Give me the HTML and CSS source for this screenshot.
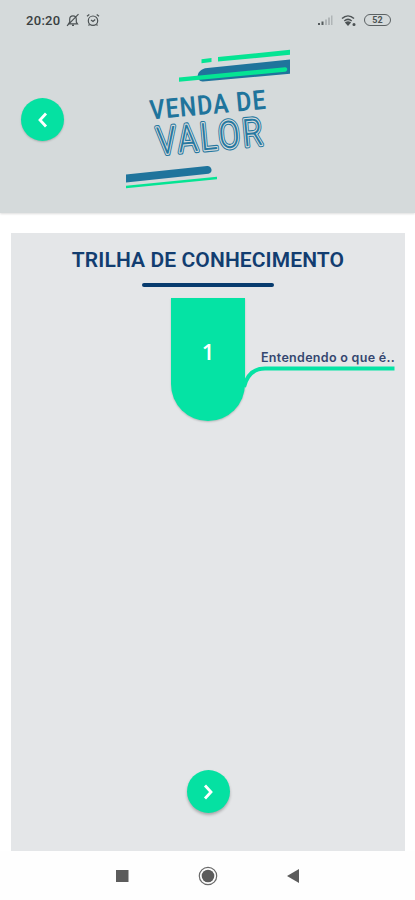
FILE: index.html
```html
<!DOCTYPE html>
<html lang="pt-BR">
<head>
<meta charset="utf-8">
<meta name="viewport" content="width=device-width, initial-scale=1">
<title>Venda de Valor</title>
<link rel="stylesheet" href="styles.css">
</head>
<body>
<div class="app">
  <header class="header">
    <div class="status">
      <div class="status-left">
        <span class="clock">20:20</span>
        <svg width="14" height="14" viewBox="0 0 14 14" class="line"><path d="M2.500 10.800h9L10.300 9V6.200C10.300 4 9 2.800 7 2.800S3.700 4 3.700 6.200V9zM6 12.300h2M1 12.800 12.500 1.200"/></svg>
        <svg width="14" height="14" viewBox="0 0 14 14" class="line"><circle cx="7" cy="7.700" r="4.700"/><path d="M1 3.300 3.300 1.500M13 3.300 10.700 1.500M5 7l2 1.500L9.200 6.500M3.500 11.500l-1 1M10.500 11.500l1 1"/></svg>
      </div>
      <div class="status-right">
        <svg width="17" height="12" viewBox="0 0 17 12"><path d="M1 9h2v2H1zM4.500 7.500h2V11h-2z" fill="#555b5d"/><path d="M8 5.500h2V11H8zM11 3.500h2V11h-2zM14 1.500h1.500V11H14z" fill="#b0b5b7"/></svg>
        <svg width="16" height="13" viewBox="0 0 16 13" class="line wifi"><path d="M1 4.500c3.600-3.300 8.400-3.300 12 0M3.300 7c2.300-2 5.100-2 7.400 0"/><path d="M5 8.700c1.300-1 2.700-1 4 0l-2 2.200z" fill="#4c5254"/><circle cx="13" cy="10.500" r=".8"/></svg>
        <span class="battery">52</span>
      </div>
    </div>
    <div class="brand">
      <button class="round" aria-label="Voltar"><svg width="24" height="24" viewBox="0 0 24 24"><path d="m15 5.500-6 6.500 6 6.500"/></svg></button>
      <svg class="logo" width="180" height="150" viewBox="120 45 180 150">
        <defs><text id="valor" class="valor" transform="scale(.82 1)" x="0" y="0">VALOR</text></defs>
        <path class="mint" d="m201.500 59.200 10-1.200v4l-10 1.200zM218 57l72-7.200v5L218 61.500z"/>
        <path class="blue" d="M205 68.200 290 59.500v14.200L203 81.500c-7 .5-8-10.500 2-13.300z"/>
        <path class="mint" d="m179 77.500 106-10.300c3-.2 3 4.200 0 4.500L179 81.800z"/>
        <text class="venda" transform="translate(150.500 119.500) rotate(-5.300) scale(.86 1)">VENDA DE</text>
        <g transform="translate(158 154.500) rotate(-5.300)">
          <use href="#valor" class="outer"/>
          <use href="#valor" class="gap"/>
          <use href="#valor" class="inner"/>
        </g>
        <path class="blue" d="m126 174.500 81-8.500c5-.3 6.500 6.500 1.500 7.800L126 182.500z"/>
        <path class="mint" d="m126 185.700 91-8.900v2.500l-91 8.900z"/>
      </svg>
    </div>
  </header>
  <main class="panel">
    <h1>TRILHA DE CONHECIMENTO</h1>
    <div class="rule"></div>
    <div class="trail">
      <div class="step">1</div>
      <div class="lesson">
        <span>Entendendo o que é..</span>
        <svg width="150" height="24" viewBox="0 0 150 24"><path d="M-1 21C2 9 9 2.500 20 2.500H149.500"/></svg>
      </div>
    </div>
    <button class="round next" aria-label="Avançar"><svg width="24" height="24" viewBox="0 0 24 24"><path d="m9 5.500 6 6.500-6 6.500"/></svg></button>
  </main>
  <nav class="nav">
    <svg width="24" height="24" viewBox="0 0 24 24"><path d="M6 6h12.500v12H6z"/></svg>
    <svg width="24" height="24" viewBox="0 0 24 24"><circle cx="12" cy="12" r="6.300"/><circle class="ring" cx="12" cy="12" r="8.700"/></svg>
    <svg width="24" height="24" viewBox="0 0 24 24"><path d="M6 12 18 5v14z"/></svg>
  </nav>
</div>
</body>
</html>
```
FILE: styles.css
```css
* { box-sizing: border-box; }
body { margin: 0; background: #fff; font-family: Roboto, sans-serif; }
svg { display: block; flex: none; }
.app { width: 415px; height: 900px; display: flex; flex-direction: column; overflow: hidden; }
.header { height: 213px; background: #d5dadb; flex: none; box-shadow: 0 1px 2px #0002; }
.status { height: 45px; padding: 0 24px 5px 26px; display: flex; align-items: center; justify-content: space-between; }
.status-left, .status-right { display: flex; align-items: center; gap: 6px; }
.clock { font-size: 13px; font-weight: 500; color: #393f41; letter-spacing: .3px; }
.status-right { gap: 7px; }
.line { fill: none; stroke: #4c5254; stroke-width: 1.2; }
.wifi { stroke-width: 1.5; }
.battery { width: 27px; height: 12px; border: 1.5px solid #5b6163; border-radius: 6px; font-size: 9px; line-height: 10px; font-weight: 700; text-align: center; color: #4c5254; }
.brand { display: flex; align-items: flex-start; padding-left: 21px; }
.round { width: 43px; height: 43px; padding: 0; border: 0; border-radius: 50%; background: #05e1a2; display: flex; align-items: center; justify-content: center; flex: none; box-shadow: 0 1px 2px #0003; }
.round path { fill: none; stroke: #fff; stroke-width: 2.8; }
.brand .round { margin-top: 53px; }
.logo { margin-left: 56px; }
.mint { fill: #05e493; }
.blue { fill: #1f749c; }
.venda { font: 600 27px Roboto, sans-serif; letter-spacing: 1.200px; fill: #1f749c; }
.valor { font: 300 38px Roboto, sans-serif; letter-spacing: 3.700px; stroke-linejoin: round; }
.outer { fill: #2678a0; stroke: #2678a0; stroke-width: 4.600px; }
.gap { fill: #d5dadb; stroke: #d5dadb; stroke-width: 2.400px; }
.inner { fill: #2678a0; stroke: #2678a0; stroke-width: 0; }
.panel { width: 394px; height: 618px; margin: 20px 0 0 11px; background: #e4e6e8; flex: none; display: flex; flex-direction: column; align-items: center; }
h1 { margin: 15px 0 0; font-size: 21px; line-height: 24px; font-weight: 600; letter-spacing: .1px; color: #123d70; white-space: nowrap; }
.rule { width: 132px; height: 4px; margin-top: 11px; border-radius: 2px; background: #073b6e; }
.trail { width: 100%; margin-top: 11px; padding-left: 160px; display: flex; }
.step { width: 74px; height: 123px; padding-bottom: 17px; background: #05e3a4; border-radius: 0 0 37px 37px; box-shadow: 0 1px 2px #0003; display: flex; align-items: center; justify-content: center; color: #fff; font: 600 22px "Open Sans", sans-serif; }
.lesson { width: 150px; padding-top: 51px; }
.lesson span { display: block; margin-left: 16px; height: 17px; font: 600 12.500px/17px Inter, sans-serif; letter-spacing: .3px; color: #34466f; white-space: nowrap; }
.lesson svg { overflow: visible; }
.lesson path { fill: none; stroke: #05e3a4; stroke-width: 4; }
.next { margin-top: 349px; box-shadow: 0 2px 3px #0004; }
.nav { flex: 1; padding: 0 110px; display: flex; align-items: center; justify-content: space-between; background: #fefefe; }
.nav svg { fill: #5c5c5c; }
.nav .ring { fill: none; stroke: #6a6a6a; stroke-width: 1.2; }
```
